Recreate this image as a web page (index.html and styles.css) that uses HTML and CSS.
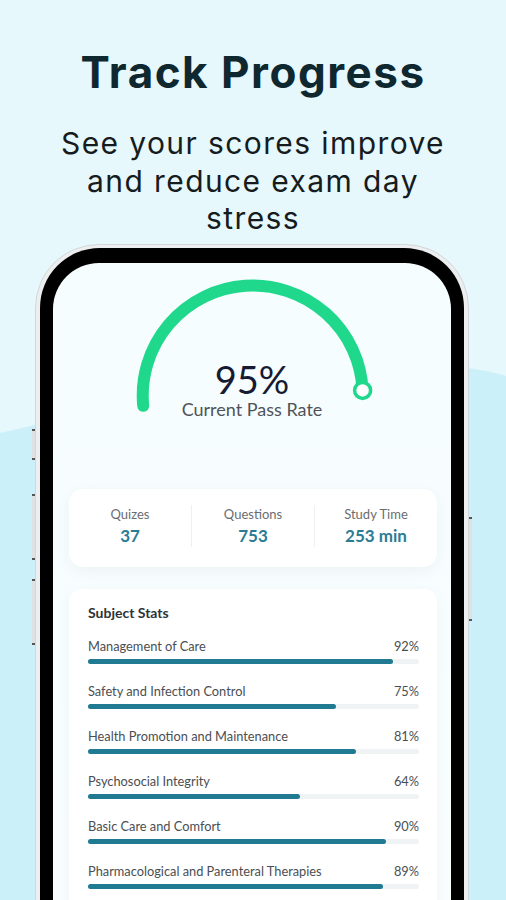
FILE: index.html
```html
<!DOCTYPE html>
<html lang="en">
<head>
  <meta charset="UTF-8">
  <title>Track Progress</title>
  <meta name="viewport" content="width=device-width, initial-scale=1.0">
  <link rel="stylesheet" href="styles.css">
</head>
<body>
  <div class="page">
    <h1>Track Progress</h1>
    <p class="subtitle">See your scores improve<br>and reduce exam day<br>stress</p>

    <div class="phone">
      <span class="side-btn btn-1"></span>
      <span class="side-btn btn-2"></span>
      <span class="side-btn btn-3"></span>
      <span class="side-btn btn-right"></span>

      <div class="bezel">
        <div class="screen">

          <div class="gauge">
            <svg width="400" height="200" viewBox="0 0 400 200">
              <path d="M308.2 120.1 A110 110 0 0 1 306.3 130" fill="none" stroke="#eef1f2" stroke-width="12" stroke-linecap="round"/>
              <path d="M90.2 142.8 A110 110 0 1 1 309.6 127.4" fill="none" stroke="#1fd88c" stroke-width="12" stroke-linecap="round"/>
              <circle cx="309.6" cy="127.4" r="8" fill="#ffffff" stroke="#1fd88c" stroke-width="3.5"/>
            </svg>
            <div class="gauge-text">
              <div class="gauge-value">95%</div>
              <div class="gauge-label">Current Pass Rate</div>
            </div>
          </div>

          <div class="stats-card">
            <div class="stat">
              <div class="stat-label">Quizes</div>
              <div class="stat-value">37</div>
            </div>
            <div class="stat">
              <div class="stat-label">Questions</div>
              <div class="stat-value">753</div>
            </div>
            <div class="stat">
              <div class="stat-label">Study Time</div>
              <div class="stat-value">253 min</div>
            </div>
          </div>

          <div class="subject-card">
            <div class="subject-title">Subject Stats</div>

            <div class="subject-row">
              <div class="subject-head"><span>Management of Care</span><span>92%</span></div>
              <div class="bar"><div class="bar-fill" style="width: 92%"></div></div>
            </div>
            <div class="subject-row">
              <div class="subject-head"><span>Safety and Infection Control</span><span>75%</span></div>
              <div class="bar"><div class="bar-fill" style="width: 75%"></div></div>
            </div>
            <div class="subject-row">
              <div class="subject-head"><span>Health Promotion and Maintenance</span><span>81%</span></div>
              <div class="bar"><div class="bar-fill" style="width: 81%"></div></div>
            </div>
            <div class="subject-row">
              <div class="subject-head"><span>Psychosocial Integrity</span><span>64%</span></div>
              <div class="bar"><div class="bar-fill" style="width: 64%"></div></div>
            </div>
            <div class="subject-row">
              <div class="subject-head"><span>Basic Care and Comfort</span><span>90%</span></div>
              <div class="bar"><div class="bar-fill" style="width: 90%"></div></div>
            </div>
            <div class="subject-row">
              <div class="subject-head"><span>Pharmacological and Parenteral Therapies</span><span>89%</span></div>
              <div class="bar"><div class="bar-fill" style="width: 89%"></div></div>
            </div>
          </div>

        </div>
      </div>
    </div>
  </div>
</body>
</html>
```

FILE: styles.css
```css
html, body {
  margin: 0;
  height: 100%;
}

body {
  background-color: #e6f8fc;
  overflow: hidden;
  font-family: 'Lato', 'Open Sans', sans-serif;
  position: relative;
}

/* wave behind the phone */
body::before {
  content: "";
  position: absolute;
  inset: 0;
  background-color: #cbf0fa;
  clip-path: path('M0 433 Q 400 340 506 376 L 506 900 L 0 900 Z');
}

.page {
  position: relative;
  height: 900px;
  overflow: hidden;
}

h1 {
  font-family: 'Inter', 'Open Sans', sans-serif;
  font-weight: 700;
  font-size: 44px;
  color: #0f2830;
  text-align: center;
  margin: 0;
  padding-top: 46px;
  line-height: 52px;
  letter-spacing: 1.5px;
}

.subtitle {
  font-family: 'Inter', 'Open Sans', sans-serif;
  font-size: 30px;
  font-weight: 400;
  color: #161c1e;
  text-align: center;
  line-height: 37.5px;
  letter-spacing: 1.4px;
  margin: 27px 0 0;
}

.phone {
  position: relative;
  box-sizing: border-box;
  width: 434px;
  height: 700px;
  margin: 6px 0 0 35px;
  padding: 3px 4px 0;
  background-color: #eceeef;
  border: 1px solid #d3d7d9;
  border-radius: 64px 64px 0 0;
}

.side-btn {
  position: absolute;
  width: 3px;
  background-color: #dfe2e3;
  border-top: 2px solid #555;
  border-bottom: 2px solid #555;
}

.btn-1 { left: -4px; top: 184px; height: 27px; }
.btn-2 { left: -4px; top: 249px; height: 62px; }
.btn-3 { left: -4px; top: 334px; height: 62px; }
.btn-right { right: -4px; top: 272px; height: 100px; }

.bezel {
  background-color: #000;
  padding: 15px 13px 0;
  border-radius: 60px 60px 0 0;
  height: 100%;
  box-sizing: border-box;
}

.screen {
  background: linear-gradient(#f6fdfe, #f9fdfe);
  border-radius: 46px 46px 0 0;
  height: 100%;
  padding-top: 1px;
  box-sizing: border-box;
}

.gauge {
  position: relative;
  height: 226px;
}

.gauge svg {
  display: block;
  margin-top: -1px;
}

.gauge-text {
  position: absolute;
  left: 0;
  right: 0;
  top: 95px;
  text-align: center;
}

.gauge-value {
  font-size: 38px;
  font-weight: 400;
  color: #161b33;
  line-height: 42px;
}

.gauge-label {
  font-size: 18px;
  color: #4f5359;
  line-height: 22px;
  margin-top: -2px;
}

.stats-card {
  display: flex;
  margin: 0 14px 0 16px;
  padding: 16px 0 20px;
  background-color: #fff;
  border-radius: 14px;
  box-shadow: 0 4px 14px rgba(30, 60, 70, 0.05);
}

.stat {
  flex: 1;
  text-align: center;
  border-left: 1px solid #eef0f1;
}

.stat:first-child {
  border-left: none;
}

.stat-label {
  font-size: 13px;
  color: #6a6d70;
  line-height: 18px;
}

.stat-value {
  font-size: 17px;
  font-weight: 700;
  color: #2a7c94;
  line-height: 22px;
  margin-top: 2px;
}

.subject-card {
  margin: 22px 14px 0 16px;
  padding: 14px 18px 0 19px;
  background-color: #fff;
  border-radius: 12px;
  height: 400px;
  box-shadow: 0 4px 14px rgba(30, 60, 70, 0.04);
}

.subject-title {
  font-size: 14px;
  font-weight: 700;
  color: #2f3336;
  line-height: 20px;
  margin-bottom: 14px;
}

.subject-row {
  margin-bottom: 18px;
}

.subject-head {
  display: flex;
  justify-content: space-between;
  font-size: 12.8px;
  color: #4a4e52;
  line-height: 18px;
}

.bar {
  margin-top: 4px;
  height: 5px;
  border-radius: 3px;
  background-color: #f0f3f4;
}

.bar-fill {
  height: 100%;
  border-radius: 3px;
  background-color: #1f7a92;
}
```
